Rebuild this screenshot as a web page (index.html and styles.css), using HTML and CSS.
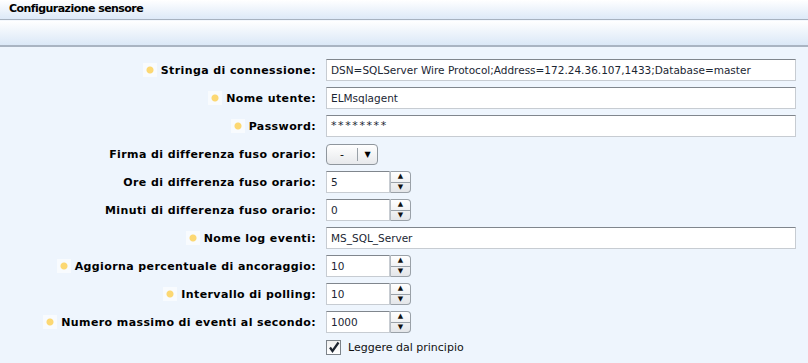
FILE: index.html
```html
<!DOCTYPE html>
<html lang="it">
<head>
    <meta charset="UTF-8">
    <title>Configurazione sensore</title>
    <link rel="stylesheet" href="styles.css">
</head>
<body>

    <div class="panel-title">Configurazione sensore</div>
    <div class="toolbar"></div>

    <div class="form">
        <div class="row">
            <div class="label req">Stringa di connessione:</div>
            <div class="field wide">DSN=SQLServer Wire Protocol;Address=172.24.36.107,1433;Database=master</div>
        </div>
        <div class="row">
            <div class="label req">Nome utente:</div>
            <div class="field wide">ELMsqlagent</div>
        </div>
        <div class="row">
            <div class="label req">Password:</div>
            <div class="field wide password">********</div>
        </div>
        <div class="row">
            <div class="label">Firma di differenza fuso orario:</div>
            <div class="select">
                <span class="select-value">-</span>
                <span class="select-arrow">&#9660;</span>
            </div>
        </div>
        <div class="row">
            <div class="label">Ore di differenza fuso orario:</div>
            <div class="spin">
                <div class="field small">5</div>
                <div class="spin-btn"><span>&#9650;</span><span>&#9660;</span></div>
            </div>
        </div>
        <div class="row">
            <div class="label">Minuti di differenza fuso orario:</div>
            <div class="spin">
                <div class="field small">0</div>
                <div class="spin-btn"><span>&#9650;</span><span>&#9660;</span></div>
            </div>
        </div>
        <div class="row">
            <div class="label req">Nome log eventi:</div>
            <div class="field wide">MS_SQL_Server</div>
        </div>
        <div class="row">
            <div class="label req">Aggiorna percentuale di ancoraggio:</div>
            <div class="spin">
                <div class="field small">10</div>
                <div class="spin-btn"><span>&#9650;</span><span>&#9660;</span></div>
            </div>
        </div>
        <div class="row">
            <div class="label req">Intervallo di polling:</div>
            <div class="spin">
                <div class="field small">10</div>
                <div class="spin-btn"><span>&#9650;</span><span>&#9660;</span></div>
            </div>
        </div>
        <div class="row">
            <div class="label req">Numero massimo di eventi al secondo:</div>
            <div class="spin">
                <div class="field small">1000</div>
                <div class="spin-btn"><span>&#9650;</span><span>&#9660;</span></div>
            </div>
        </div>
        <div class="row check-row">
            <div class="label"></div>
            <div class="check">
                <span class="box">
                    <svg width="12" height="12" viewBox="0 0 12 12"><path d="M2 6.5 L4.5 10 L10.5 1.5" fill="none" stroke="#1c2430" stroke-width="2.2"/></svg>
                </span>
                <span>Leggere dal principio</span>
            </div>
        </div>
    </div>

</body>
</html>
```

FILE: styles.css
```css
body {
    margin: 0;
    font-family: "DejaVu Sans", Verdana, sans-serif;
    font-size: 11px;
    background: #eef5fd;
    color: #000;
}
.panel-title {
    height: 19px;
    line-height: 18px;
    padding-left: 9px;
    font-weight: bold;
    letter-spacing: -0.55px;
    background: linear-gradient(#ffffff, #dde9f8);
    border-bottom: 1px solid #a7b2c0;
}
.toolbar {
    height: 24px;
    background: linear-gradient(#ffffff, #dbe8f7);
    border-top: 1px solid #f4f8fd;
    border-bottom: 2px solid #a9b4c2;
}
.form {
    padding-top: 12px;
    display: flex;
    flex-direction: column;
    gap: 6px;
}
.row {
    display: flex;
    align-items: center;
    height: 22px;
}
.label {
    width: 316px;
    flex-shrink: 0;
    margin-right: 10px;
    text-align: right;
    font-weight: bold;
    letter-spacing: 0.4px;
    white-space: nowrap;
}
.label.req::before {
    content: "";
    display: inline-block;
    width: 14px;
    height: 14px;
    margin-right: 4px;
    vertical-align: -3px;
    background: radial-gradient(circle at 7px 7px, #fcd873 0, #fcd873 3px, #f8fbfe 4px, #f8fbfe 100%);
}
.field {
    height: 20px;
    line-height: 20px;
    padding-left: 4px;
    font-size: 10.5px;
    background: #fff;
    border: 1px solid #c7ccd2;
    border-top-color: #80868d;
    color: #1b2633;
    white-space: nowrap;
    overflow: hidden;
    box-sizing: content-box;
}
.field.wide {
    width: 464px;
}
.field.small {
    width: 58px;
}
.field.password {
    letter-spacing: 1.6px;
    font-size: 11px;
}
.spin {
    display: flex;
}
.spin-btn {
    width: 19px;
    height: 20px;
    display: flex;
    flex-direction: column;
    border: 1px solid #9aa1a8;
    border-left-color: #b5bbc1;
    border-radius: 0 4px 4px 0;
    background: linear-gradient(#ffffff, #e4e6e9);
    font-size: 7px;
    color: #111;
}
.spin-btn span {
    flex: 1;
    display: flex;
    align-items: center;
    justify-content: center;
    line-height: 1;
}
.spin-btn span + span {
    border-top: 1px solid #9aa1a8;
}
.select {
    width: 50px;
    height: 19px;
    display: flex;
    border: 1px solid #8f969d;
    border-radius: 4px;
    background: linear-gradient(#ffffff, #e7e9ec);
}
.select-value {
    width: 30px;
    line-height: 19px;
    text-align: center;
}
.select-arrow {
    flex: 1;
    display: flex;
    align-items: center;
    justify-content: center;
    border-left: 1px solid #9aa1a8;
    margin: 3px 0;
    font-size: 8px;
}
.check-row {
    height: 16px;
}
.check {
    display: flex;
    align-items: center;
    gap: 7px;
    color: #111;
}
.check .box {
    width: 13px;
    height: 13px;
    border: 1px solid #7c838a;
    background: linear-gradient(#f0f0f0, #ffffff);
    display: flex;
    align-items: center;
    justify-content: center;
}
```
